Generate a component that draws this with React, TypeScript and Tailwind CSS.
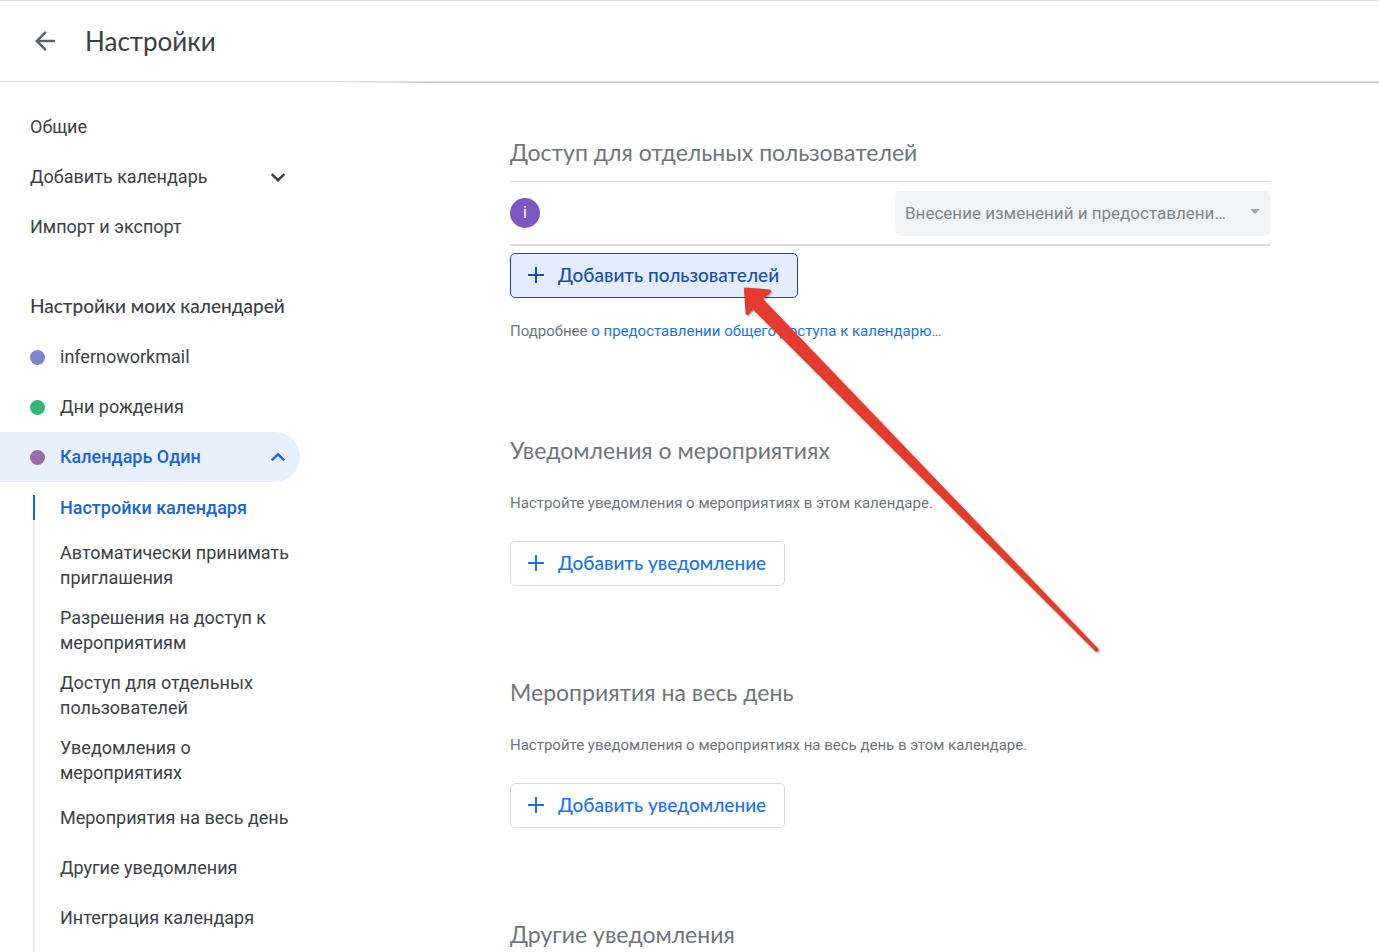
import type { ReactNode } from 'react';

const subItems = [
  'Автоматически принимать приглашения',
  'Разрешения на доступ к мероприятиям',
  'Доступ для отдельных пользователей',
  'Уведомления о мероприятиях',
  'Мероприятия на весь день',
  'Другие уведомления',
  'Интеграция календаря',
];

function Chevron({ up = false }: { up?: boolean }) {
  return (
    <svg viewBox="0 0 24 24" className="size-6 shrink-0" fill="currentColor" aria-hidden="true">
      {up ? (
        <path d="M12 7.6 4.9 14.6 6.6 16.3 12 10.9 17.4 16.3 19.1 14.6z" />
      ) : (
        <path d="M12 17 4.9 9.9 6.6 8.2 12 13.6 17.4 8.2 19.1 9.9z" />
      )}
    </svg>
  );
}

function PlusIcon() {
  return (
    <svg viewBox="0 0 16 16" className="size-4 shrink-0" fill="currentColor" aria-hidden="true">
      <path d="M7 0h2v7h7v2H9v7H7V9H0V7h7z" />
    </svg>
  );
}

function SectionTitle({ children }: { children: ReactNode }) {
  return (
    <h2 className="pb-[3px] font-['Lato','Roboto',sans-serif] text-[23px] leading-[27px] text-[#70757a]">{children}</h2>
  );
}

function AddButton({ children, active = false }: { children: ReactNode; active?: boolean }) {
  return (
    <button
      type="button"
      className={`flex h-[45px] items-center gap-[14px] rounded-[5px] border pr-[18px] pb-px pl-[17px] font-['Lato','Roboto',sans-serif] text-[19px] font-medium ${
        active ? 'border-[#174ea6] bg-[#e4edfd] text-[#174ea6]' : 'border-[#dadce0] bg-white text-[#1a73e8]'
      }`}
    >
      <PlusIcon />
      {children}
    </button>
  );
}

function NotificationSection({ title, text }: { title: string; text: string }) {
  return (
    <section className="flex h-[242px] flex-col items-start">
      <SectionTitle>{title}</SectionTitle>
      <p className="mt-[26px] mb-[28px] text-[15px] leading-5 text-[#70757a]">{text}</p>
      <AddButton>Добавить уведомление</AddButton>
    </section>
  );
}

function CalendarLink({ color, name }: { color: string; name: string }) {
  return (
    <a href="#calendar" className="flex h-[50px] items-center gap-[15px] pl-[30px]">
      <span className={`size-[15px] rounded-full ${color}`} />
      {name}
    </a>
  );
}

export default function App() {
  return (
    <div className="relative flex h-screen flex-col overflow-hidden bg-white font-['Roboto',sans-serif] text-lg text-[#3c4043]">
      <header className="flex h-[82px] shrink-0 items-center gap-[25px] border-y border-[#dadce0] pl-[30px]">
        <button type="button" aria-label="Назад" className="text-[#5f6368]">
          <svg viewBox="0 0 24 24" className="size-[30px]" fill="currentColor" aria-hidden="true">
            <path d="M20 11H7.83l5.59-5.59L12 4l-8 8 8 8 1.41-1.41L7.83 13H20v-2z" />
          </svg>
        </button>
        <h1 className="font-['Lato','Roboto',sans-serif] text-[26px] leading-8">Настройки</h1>
      </header>

      <div className="flex min-h-0 flex-1">
        <nav className="flex w-[300px] shrink-0 flex-col pt-5" aria-label="Настройки">
          <a href="#general" className="flex h-[50px] shrink-0 items-center pl-[30px]">
            Общие
          </a>
          <button
            type="button"
            className="flex h-[50px] shrink-0 items-center justify-between pr-[10px] pl-[30px]"
          >
            Добавить календарь
            <Chevron />
          </button>
          <a href="#import" className="flex h-[50px] shrink-0 items-center pl-[30px]">
            Импорт и экспорт
          </a>
          <h2 className="mt-[30px] flex h-[50px] shrink-0 items-center pb-[2px] pl-[30px] font-['Lato','Roboto',sans-serif] text-[19px] font-medium">
            Настройки моих календарей
          </h2>
          <CalendarLink color="bg-[#7986cb]" name="infernoworkmail" />
          <CalendarLink color="bg-[#33b679]" name="Дни рождения" />
          <button
            type="button"
            aria-expanded="true"
            className="flex h-[50px] shrink-0 items-center gap-[15px] rounded-r-full bg-[#e8f0fe] pr-[10px] pl-[30px] font-medium text-[#1967d2]"
          >
            <span className="size-[15px] rounded-full bg-[#9e69af]" />
            <span className="flex-1 text-left">Календарь Один</span>
            <Chevron up />
          </button>
          <ul className="mt-[13px] ml-[33px] flex grow flex-col leading-[25px]">
            <li className="border-l-2 border-[#1967d2] pl-[25px] font-medium text-[#1967d2]">
              <a href="#settings">Настройки календаря</a>
            </li>
            <li className="h-[13px] border-l-2 border-[#e8eaed]" aria-hidden="true" />
            {subItems.map((item) => (
              <li
                key={item}
                className="flex min-h-[50px] items-center border-l-2 border-[#e8eaed] pt-[7px] pb-2 pl-[25px]"
              >
                <a href="#section">{item}</a>
              </li>
            ))}
            <li className="grow border-l-2 border-[#e8eaed]" aria-hidden="true" />
          </ul>
        </nav>

        <main className="min-w-0 flex-1">
          <div className="ml-8 h-px bg-linear-to-r from-transparent to-[#c4c6c9] to-10%" />
          <div className="mr-[109px] ml-[210px] pt-[56px]">
            <section className="flex h-[298px] flex-col items-start">
              <SectionTitle>Доступ для отдельных пользователей</SectionTitle>
              <div className="mt-3 flex h-[65px] w-full items-center justify-between border-t border-b-2 border-t-[#dadce0] border-b-[#dadce0]">
                <span className="flex size-[30px] items-center justify-center rounded-full bg-[#7e57c2] text-base text-white">
                  i
                </span>
                <div className="relative w-[375px]">
                  <select
                    aria-label="Права доступа"
                    disabled
                    className="h-[45px] w-full appearance-none truncate rounded-[5px] bg-[#f1f3f4] pr-[40px] pl-[10px] text-[17px] text-[#80868b] opacity-100"
                  >
                    <option>Внесение изменений и предоставление доступа</option>
                  </select>
                  <svg
                    viewBox="0 0 10 5"
                    className="pointer-events-none absolute top-[18px] right-[10px] h-[5px] w-[10px] fill-[#a3a5a8]"
                    aria-hidden="true"
                  >
                    <path d="M0 0h10L5 5z" />
                  </svg>
                </div>
              </div>
              <div className="mt-[7px]">
                <AddButton active>Добавить пользователей</AddButton>
              </div>
              <p className="mt-[23px] text-[15px] leading-5 text-[#70757a]">
                Подробнее{' '}
                <a href="#help" className="text-[#1a73e8]">
                  о предоставлении общего доступа к календарю
                </a>
                …
              </p>
            </section>
            <NotificationSection
              title="Уведомления о мероприятиях"
              text="Настройте уведомления о мероприятиях в этом календаре."
            />
            <NotificationSection
              title="Мероприятия на весь день"
              text="Настройте уведомления о мероприятиях на весь день в этом календаре."
            />
            <SectionTitle>Другие уведомления</SectionTitle>
          </div>
        </main>
      </div>

      <svg
        viewBox="0 0 364 374"
        className="pointer-events-none absolute top-[284px] left-[740px] h-[374px] w-[364px]"
        aria-hidden="true"
      >
        <g className="drop-shadow-[1px_1px_1px_rgba(0,0,0,0.4)]">
          <path
            d="M5 3.500 29.500 5.500Q32.500 6.500 30 9L23 15 358.500 365Q359 367.500 356 368L13 25.500 8.500 30.500Q6 32 5.500 29L4 5Q4 3.500 5 3.500z"
            fill="#e53b2f"
          />
        </g>
      </svg>
    </div>
  );
}
